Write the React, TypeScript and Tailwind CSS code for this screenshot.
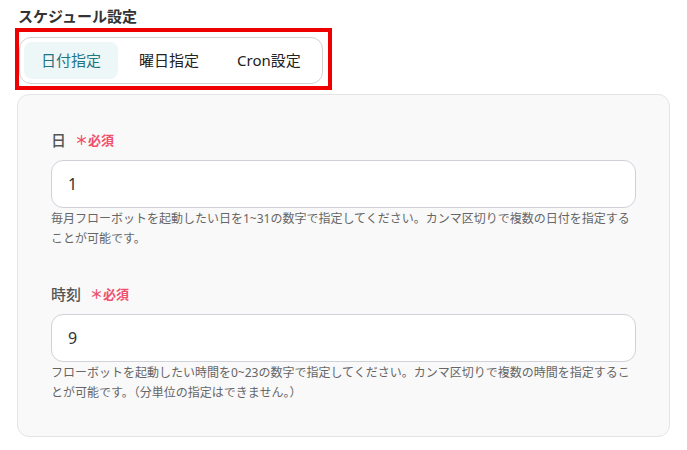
const FONT = { fontFamily: '"Noto Sans", "Noto Sans CJK JP", sans-serif' }

const TABS = ['日付指定', '曜日指定', 'Cron設定']

function Field({ label, value, help, first }: { label: string; value: string; help: string; first?: boolean }) {
  return (
    <div className={first ? '' : 'mt-[35px]'}>
      <div className="flex items-center h-[20px] leading-[20px]">
        <span className="text-[15px] font-medium text-[#555]">{label}</span>
        <span className="ml-[9px] text-[13px] font-bold text-[#f0506e]">＊必須</span>
      </div>
      <div className="mt-[10px] h-[48px] bg-white border border-[#cfd2da] rounded-[12px] flex items-center pl-[16px] text-[16px] text-[#333]">
        {value}
      </div>
      <p className="mt-[1px] text-[12px] leading-[20px] text-[#666]">{help}</p>
    </div>
  )
}

export default function App() {
  return (
    <div className="w-[687px] h-[450px] bg-white pl-[17px] pr-[17px] pt-[6px]" style={FONT}>
      <h2 className="ml-[1px] text-[15px] leading-[20px] font-bold text-[#333]">スケジュール設定</h2>

      <div className="relative mt-[11px] ml-[2px] w-fit">
        <div className="flex gap-[4px] p-[4px] border border-[#d2d2d2] rounded-[12px] bg-white">
          {TABS.map((t, i) => (
            <div
              key={t}
              className={
                i === 0
                  ? 'h-[37px] px-[17px] flex items-center rounded-[8px] bg-[#eef7f7] text-[15px] text-[#1f7486]'
                  : 'h-[37px] px-[17px] flex items-center rounded-[8px] text-[15px] text-[#222]'
              }
            >
              {t}
            </div>
          ))}
        </div>
        <div className="absolute -left-[4px] -top-[9px] -right-[9px] -bottom-[6px] border-4 border-[#ee0000] pointer-events-none" />
      </div>

      <div className="mt-[10px] bg-[#f9f9f9] border border-[#e4e4e4] rounded-[12px] px-[33px] pt-[35px] pb-[33px]">
        <Field
          first
          label="日"
          value="1"
          help="毎月フローボットを起動したい日を1~31の数字で指定してください。カンマ区切りで複数の日付を指定することが可能です。"
        />
        <Field
          label="時刻"
          value="9"
          help="フローボットを起動したい時間を0~23の数字で指定してください。カンマ区切りで複数の時間を指定することが可能です。（分単位の指定はできません。）"
        />
      </div>
    </div>
  )
}
